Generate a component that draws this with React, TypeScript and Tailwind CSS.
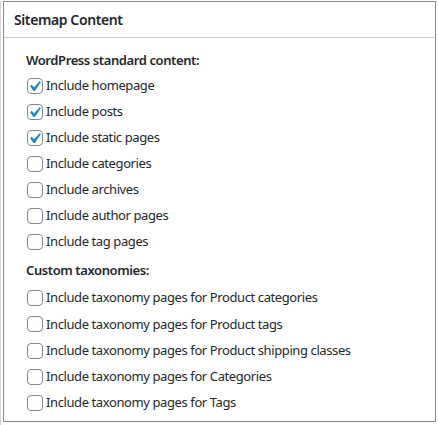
import React from 'react'

const STANDARD = [
  { label: 'Include homepage', checked: true },
  { label: 'Include posts', checked: true },
  { label: 'Include static pages', checked: true },
  { label: 'Include categories', checked: false },
  { label: 'Include archives', checked: false },
  { label: 'Include author pages', checked: false },
  { label: 'Include tag pages', checked: false },
]

const TAXONOMIES = [
  'Include taxonomy pages for Product categories',
  'Include taxonomy pages for Product tags',
  'Include taxonomy pages for Product shipping classes',
  'Include taxonomy pages for Categories',
  'Include taxonomy pages for Tags',
]

function Checkbox({ checked }: { checked: boolean }) {
  return (
    <span className="relative inline-block w-4 h-4 shrink-0 rounded-[4px] border border-[#7e8993] bg-white">
      {checked && (
        <svg className="absolute -left-[4px] -top-[3px] w-[21px] h-[21px]" viewBox="0 0 20 20">
          <path fill="#1e8cbe" d="M14.83 4.89l1.34.94-5.81 8.38H9.02L5.78 9.67l1.34-1.25 2.57 2.4z" />
        </svg>
      )}
    </span>
  )
}

function Row({ label, checked, tall }: { label: string; checked: boolean; tall?: boolean }) {
  return (
    <label className={`flex items-center pl-[23px] gap-[3px] ${tall ? 'h-[26.25px]' : 'h-[26px]'}`}>
      <Checkbox checked={checked} />
      <span>{label}</span>
    </label>
  )
}

export default function App() {
  return (
    <div
      className="w-[438px] h-[425px] bg-white border-l border-[#d4d4d4] text-[13px] text-[#23282d] tracking-[-0.4px]"
      style={{ fontFamily: '"Noto Sans", "Open Sans", sans-serif' }}
    >
      <div className="ml-[2px] mt-[1px] w-[433px] h-[421px] border border-[#8a8a8a] flex flex-col">
        {/* header */}
        <div className="h-[36px] border-b border-[#cccccc] flex items-center pl-[10px]">
          <h2 className="text-[14px] font-semibold leading-none">Sitemap Content</h2>
        </div>

        <div className="pt-[12px]">
          <p className="h-[20px] leading-[20px] pl-[22px] font-semibold">WordPress standard content:</p>
          <div className="mt-[3px]">
            {STANDARD.map((item) => (
              <Row key={item.label} label={item.label} checked={item.checked} />
            ))}
          </div>

          <p className="mt-[5px] h-[20px] leading-[20px] pl-[22px] font-semibold">Custom taxonomies:</p>
          <div className="mt-[5px]">
            {TAXONOMIES.map((label) => (
              <Row key={label} label={label} checked={false} tall />
            ))}
          </div>
        </div>
      </div>
    </div>
  )
}
